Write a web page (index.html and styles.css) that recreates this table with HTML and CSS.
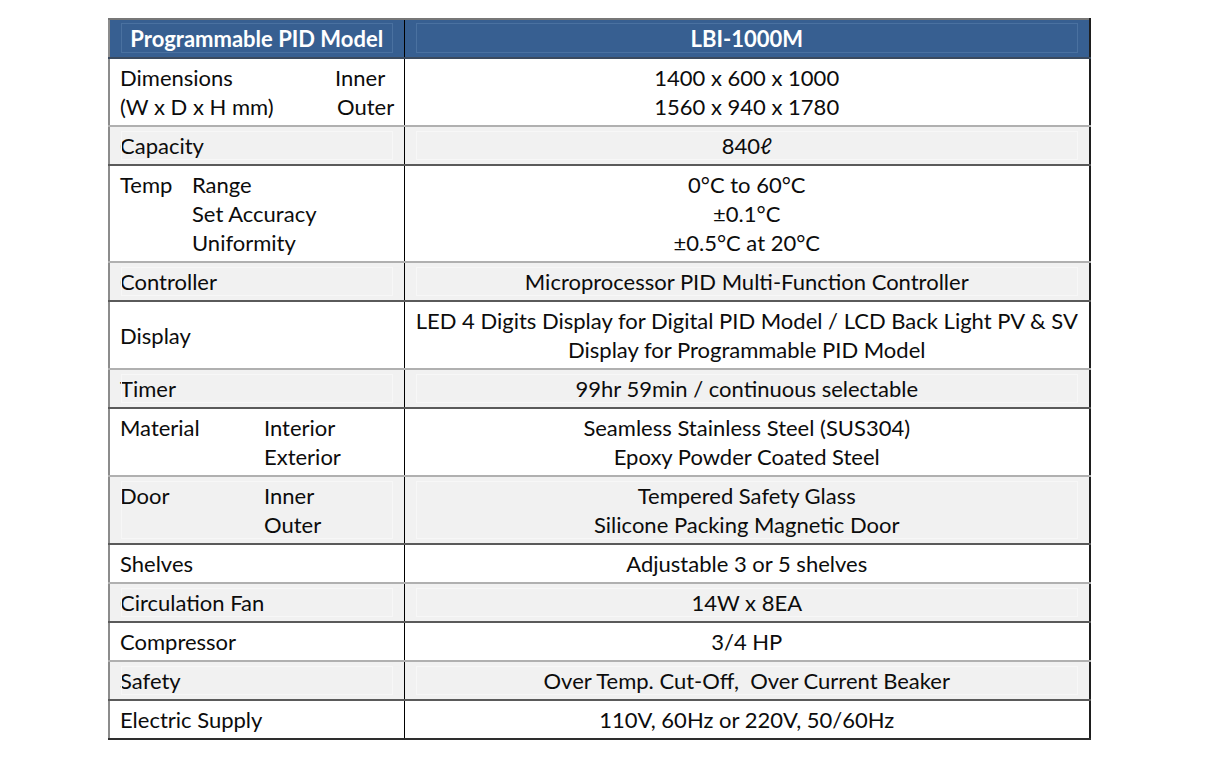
FILE: index.html
```html
<!DOCTYPE html>
<html>
<head>
<meta charset="utf-8">
<link rel="stylesheet" href="styles.css">
</head>
<body>
<table class="spec">
  <colgroup><col class="c-label"><col class="c-value"></colgroup>
  <thead>
    <tr class="head">
      <th>Programmable PID Model</th>
      <th>LBI-1000M</th>
    </tr>
  </thead>
  <tbody>
    <tr class="w">
      <td><div class="sub dim"><span>Dimensions</span><span>Inner</span><span>(W x D x H mm)</span><span class="nudge">Outer</span></div></td>
      <td class="val">1400 x 600 x 1000<br>1560 x 940 x 1780</td>
    </tr>
    <tr class="g"><td>Capacity</td><td class="val">840ℓ</td></tr>
    <tr class="w">
      <td><div class="sub temp"><span>Temp</span><span>Range</span><span></span><span>Set Accuracy</span><span></span><span>Uniformity</span></div></td>
      <td class="val">0°C to 60°C<br>±0.1°C<br>±0.5°C at 20°C</td>
    </tr>
    <tr class="g"><td>Controller</td><td class="val">Microprocessor PID Multi-Function Controller</td></tr>
    <tr class="w">
      <td>Display</td>
      <td class="val">LED 4 Digits Display for Digital PID Model / LCD Back Light PV &amp; SV<br>Display for Programmable PID Model</td>
    </tr>
    <tr class="g"><td>Timer</td><td class="val">99hr 59min / continuous selectable</td></tr>
    <tr class="w">
      <td><div class="sub mat"><span>Material</span><span>Interior</span><span></span><span>Exterior</span></div></td>
      <td class="val">Seamless Stainless Steel (SUS304)<br>Epoxy Powder Coated Steel</td>
    </tr>
    <tr class="g">
      <td><div class="sub mat"><span>Door</span><span>Inner</span><span></span><span>Outer</span></div></td>
      <td class="val">Tempered Safety Glass<br>Silicone Packing Magnetic Door</td>
    </tr>
    <tr class="w"><td>Shelves</td><td class="val">Adjustable 3 or 5 shelves</td></tr>
    <tr class="g"><td>Circulation Fan</td><td class="val">14W x 8EA</td></tr>
    <tr class="w"><td>Compressor</td><td class="val">3/4 HP</td></tr>
    <tr class="g"><td>Safety</td><td class="val">Over Temp. Cut-Off,&nbsp; Over Current Beaker</td></tr>
    <tr class="w last"><td>Electric Supply</td><td class="val">110V, 60Hz or 220V, 50/60Hz</td></tr>
  </tbody>
</table>
</body>
</html>
```

FILE: styles.css
```css
html, body {
  margin: 0;
  padding: 0;
  background: #ffffff;
}

body {
  padding: 18px 0 0 108px;
  font-family: Lato, "Open Sans", sans-serif;
  color: #0c0c0c;
}

.spec {
  border-collapse: collapse;
  width: 983px;
  table-layout: fixed;
  font-size: 22px;
  border-left: 2px solid #8c8c8c;
  border-right: 2px solid #1e1e1e;
  border-top: 2px solid #777777;
  border-bottom: 2px solid #2e2e2e;
}

.c-label { width: 295px; }
.c-value { width: auto; }

.spec th,
.spec td {
  position: relative;
  padding: 4px 0 4px 10px;
  line-height: 29px;
  vertical-align: middle;
  text-align: left;
  font-weight: normal;
}

.spec td + td,
.spec th + th {
  border-left: 1px solid #000000;
}

.head th {
  background: #375f91;
  color: #ffffff;
  font-weight: bold;
  font-size: 22px;
  text-align: center;
  padding: 4px 0 4px 0;
  height: 28px;
  border-bottom: 2px solid #3b4a5e;
}

.head th::after {
  content: "";
  position: absolute;
  top: 3px;
  bottom: 4px;
  left: 11px;
  right: 11px;
  border: 1px solid #4a71a0;
  pointer-events: none;
}

.spec td.val {
  text-align: center;
  padding-left: 0;
}

.g td {
  background: #f1f1f1;
  border-top: 2px solid #b0b0b0;
  border-bottom: 2px solid #5a5a5a;
}

.g td::after {
  content: "";
  position: absolute;
  top: 4px;
  bottom: 4px;
  left: 11px;
  right: 11px;
  border: 1px solid #f7f7f7;
  pointer-events: none;
}

.w td {
  background: #ffffff;
}

.sub {
  display: grid;
  row-gap: 0;
}

.dim { grid-template-columns: 215px auto; }
.temp { grid-template-columns: 72px auto; }
.mat { grid-template-columns: 144px auto; }

.nudge { padding-left: 2px; }
```
